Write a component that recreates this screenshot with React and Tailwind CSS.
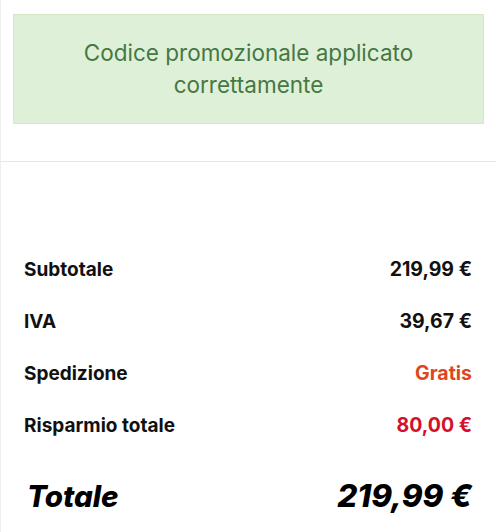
export default function App() {
  const rows = [
    { label: "Subtotale", value: "219,99 €", color: "text-[#111111]" },
    { label: "IVA", value: "39,67 €", color: "text-[#111111]" },
    { label: "Spedizione", value: "Gratis", color: "text-[#e0461d]" },
    { label: "Risparmio totale", value: "80,00 €", color: "text-[#d4112a]" },
  ];
  return (
    <div
      className="w-[496px] h-[532px] bg-white overflow-hidden border-l border-[#eeeeee]"
      style={{ fontFamily: "Inter, 'Noto Sans', sans-serif" }}
    >
      <div className="pt-[14px] px-[12px]">
        <div className="h-[110px] bg-[#dff0d8] border border-[#d6e9c6] flex items-center justify-center text-center px-6">
          <p className="text-[22.5px] leading-[32px] text-[#467843]">
            Codice promozionale applicato
            <br />
            correttamente
          </p>
        </div>
      </div>
      <div className="mt-[37px] h-[1px] bg-[#e6e6e6]" />
      <div className="pt-[82px] px-[23px] pr-[24px]">
        {rows.map((r) => (
          <div key={r.label} className="h-[52px] flex items-center justify-between">
            <span className="text-[19px] font-bold text-[#111111]">{r.label}</span>
            <span className={`text-[19.5px] font-bold ${r.color}`}>{r.value}</span>
          </div>
        ))}
        <div className="mt-[14px] h-[60px] flex items-center justify-between">
          <span className="text-[29.5px] font-extrabold italic text-black pl-[3px]">Totale</span>
          <span className="text-[31.5px] font-extrabold italic text-black">219,99 €</span>
        </div>
      </div>
    </div>
  );
}
